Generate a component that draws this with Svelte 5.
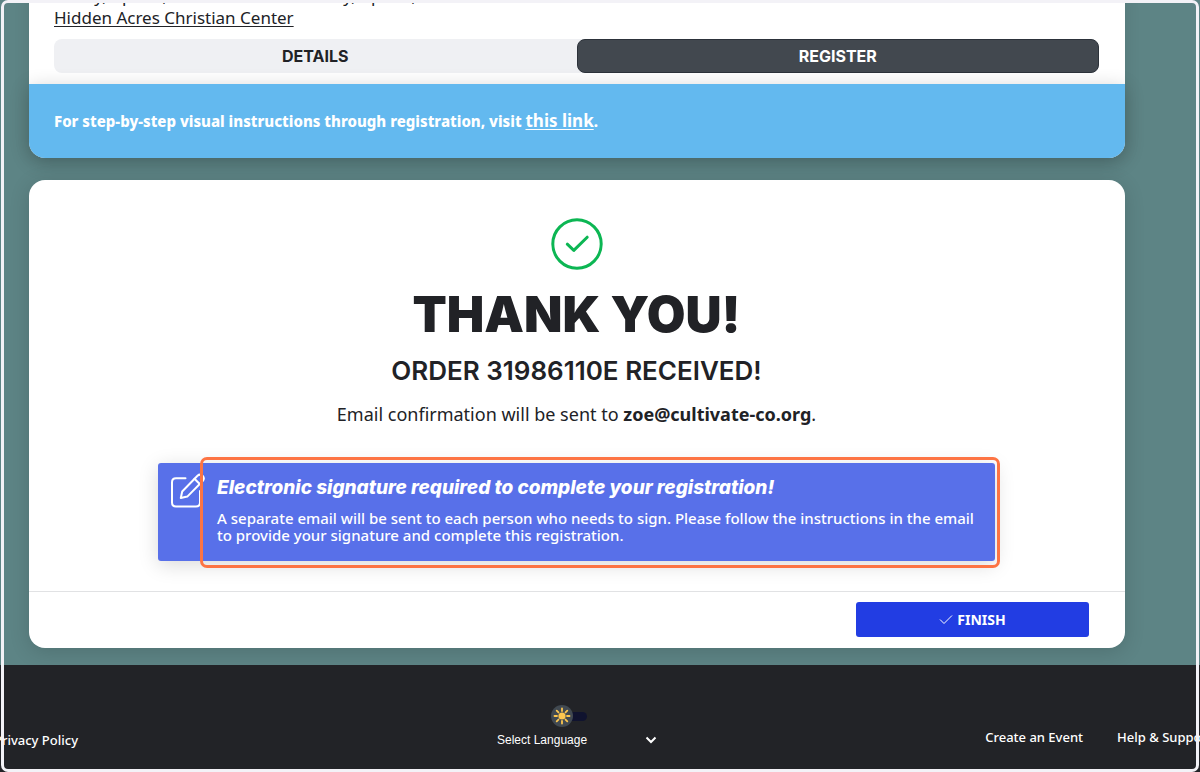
<script>
  let dark = $state(false);
  let language = $state('');
</script>

<div class="page">
  <main>
    <section class="event">
      <div class="info">
        <p class="dates">Friday, April 4, 2025 5:00 PM - Sunday, April 6, 2025 11:00 AM</p>
        <a class="venue" href="#venue">Hidden Acres Christian Center</a>
        <nav class="tabs">
          <button type="button">DETAILS</button>
          <button type="button" class="active">REGISTER</button>
        </nav>
      </div>
      <p class="banner">
        For step-by-step visual instructions through registration, visit <a href="#guide">this link</a>.
      </p>
    </section>

    <section class="order">
      <div class="summary">
        <svg class="done" viewBox="0 0 52 52" aria-hidden="true">
          <circle cx="26" cy="26" r="24.2" />
          <path d="M16.3 26.2 L22.8 32.4 L36.2 19.2" />
        </svg>
        <h1>THANK YOU!</h1>
        <h2>ORDER 31986110E RECEIVED!</h2>
        <p class="mail">Email confirmation will be sent to <strong>zoe@cultivate-co.org</strong>.</p>
        <div class="notice">
          <svg class="edit" viewBox="0 0 36 36" aria-hidden="true">
            <path d="M15.5 5.3 H6 Q2 5.3 2 9.3 V29.5 Q2 33.5 6 33.5 H26 Q30 33.5 30 29.5 V18" />
            <path d="M10.8 25 L12.2 18.5 L27.5 2.8 Q30 0.5 32.6 2.8 Q35 5.3 32.7 8 L17.3 23.6 Z" />
            <path d="M24.5 5.8 L29.7 11" />
          </svg>
          <div class="message">
            <h3>Electronic signature required to complete your registration!</h3>
            <p>
              A separate email will be sent to each person who needs to sign. Please follow the
              instructions in the email to provide your signature and complete this registration.
            </p>
          </div>
          <span class="highlight"></span>
        </div>
      </div>
      <div class="actions">
        <button type="button">
          <svg viewBox="0 0 14 12" aria-hidden="true"><path d="M1 5.5 L5 9.5 L13 1.5" /></svg>
          FINISH
        </button>
      </div>
    </section>
  </main>

  <footer>
    <a class="privacy" href="#privacy">Privacy Policy</a>
    <div class="prefs">
      <label class="theme">
        <input type="checkbox" bind:checked={dark} aria-label="Dark theme" />
        <svg viewBox="0 0 22 22" aria-hidden="true">
          <circle class="disc" cx="11" cy="11" r="11" />
          <g class="rays">
            {#each [0, 45, 90, 135, 180, 225, 270, 315] as angle}
              <path d="M11 3.5 V6" transform="rotate({angle} 11 11)" />
            {/each}
          </g>
          <circle class="sun" cx="11" cy="11" r="3.6" />
        </svg>
      </label>
      <div class="language">
        <select bind:value={language} aria-label="Language">
          <option value="">Select Language</option>
          <option value="es">Spanish</option>
        </select>
        <svg viewBox="0 0 12 8" aria-hidden="true"><path d="M1.5 1.5 L6 6 L10.5 1.5" /></svg>
      </div>
    </div>
    <div class="links">
      <a href="#create">Create an Event</a>
      <a href="#help">Help &amp; Support</a>
    </div>
  </footer>
  <div class="frame"></div>
</div>

<style>
  :global(body) {
    margin: 0;
    background: #222327;
  }
  .page {
    min-height: 100vh;
    display: flex;
    flex-direction: column;
    overflow: hidden;
    background: #5d8485;
    color: #212226;
    font-family: "Noto Sans", "Open Sans", sans-serif;
    font-size: 17px;
  }
  h1, h2, h3, p {
    margin: 0;
  }
  a {
    color: inherit;
  }
  button {
    font: inherit;
    cursor: pointer;
  }
  main {
    display: flex;
    flex-direction: column;
    gap: 22px;
    padding: 0 75px 17px 29px;
  }
  .event {
    margin-top: -16px;
    background: #fff;
    border-radius: 16px;
    box-shadow: 0 2px 16px rgba(0, 0, 0, 0.1);
  }
  .info {
    padding: 0 26px 11px 25px;
    line-height: 24px;
  }
  .dates {
    white-space: nowrap;
  }
  .venue {
    display: block;
    width: fit-content;
    line-height: 20px;
    text-underline-offset: 2px;
  }
  .tabs {
    display: grid;
    grid-template-columns: 1fr 1fr;
    margin-top: 11px;
    border-radius: 8px;
    background: #eff0f3;
  }
  .tabs button {
    padding: 4px;
    border: 1px solid transparent;
    border-radius: 8px;
    background: none;
    color: #212226;
    font-family: Inter, sans-serif;
    font-size: 16px;
    font-weight: 700;
    line-height: 24px;
  }
  .tabs .active {
    border-color: #2c323a;
    background: #42484f;
    color: #fff;
  }
  .banner {
    padding: 25px 25px 25px;
    border-radius: 0 0 16px 16px;
    background: #63b9ef;
    box-shadow: 0 4px 20px rgba(0, 0, 0, 0.2);
    color: #fff;
    font-size: 15px;
    font-weight: 800;
    line-height: 24px;
  }
  .banner a {
    font-size: 17px;
    font-weight: 700;
    line-height: 20px;
    text-underline-offset: 2px;
  }
  .order {
    border-radius: 16px;
    background: #fff;
    box-shadow: 0 4px 20px rgba(0, 0, 0, 0.15);
  }
  .summary {
    display: flex;
    flex-direction: column;
    align-items: center;
    padding: 38px 25px 30px 24px;
    text-align: center;
  }
  .done {
    width: 52px;
    height: 52px;
    fill: none;
    stroke: #0cb653;
    stroke-width: 3;
    stroke-linecap: round;
    stroke-linejoin: round;
  }
  h1 {
    margin-top: 16px;
    font-family: Inter, sans-serif;
    font-size: 50px;
    font-weight: 900;
    line-height: 56px;
  }
  h2 {
    margin-top: 14px;
    font-family: Inter, sans-serif;
    font-size: 26px;
    font-weight: 600;
    line-height: 30px;
  }
  .mail {
    margin-top: 16px;
    font-size: 18px;
    line-height: 24px;
  }
  .notice {
    position: relative;
    display: flex;
    gap: 11px;
    box-sizing: border-box;
    width: 80%;
    max-width: 837px;
    margin-top: 37px;
    padding: 13px 12px 17px;
    border-radius: 3px;
    background: #5870e9;
    box-shadow: 0 4px 20px rgba(0, 0, 0, 0.15);
    color: #fff;
    text-align: left;
  }
  .edit {
    flex: none;
    width: 36px;
    height: 36px;
    margin-top: -3px;
    fill: none;
    stroke: #fff;
    stroke-width: 2;
    stroke-linejoin: round;
    stroke-linecap: round;
  }
  h3 {
    font-family: Inter, sans-serif;
    font-size: 19px;
    font-style: italic;
    font-weight: 800;
    line-height: 24px;
  }
  .message p {
    margin-top: 10px;
    font-size: 15px;
    font-weight: 500;
    line-height: 17px;
  }
  .highlight {
    position: absolute;
    inset: -6px -5px -7px 42px;
    border: 3px solid #fd7444;
    border-radius: 7px;
    pointer-events: none;
  }
  .actions {
    display: flex;
    justify-content: flex-end;
    padding: 10px 36px 11px;
    border-top: 1px solid #e1e2e4;
  }
  .actions button {
    display: flex;
    align-items: center;
    justify-content: center;
    gap: 4px;
    width: 233px;
    padding: 7px;
    border: 0;
    border-radius: 3px;
    background: #223de3;
    color: #fff;
    font-size: 14px;
    font-weight: 700;
    line-height: 21px;
  }
  .actions svg {
    width: 14px;
    height: 12px;
    fill: none;
    stroke: #fff;
  }
  footer {
    position: relative;
    flex: 1;
    display: grid;
    grid-template-columns: 1fr 160px 1fr;
    align-items: start;
    padding: 40px 0 24px;
    background: #222327;
    color: #fff;
    font-size: 13px;
    font-weight: 500;
    line-height: 18px;
    white-space: nowrap;
  }
  footer a {
    text-decoration: none;
  }
  .privacy {
    margin: 26px 0 0 -6px;
  }
  .prefs {
    display: flex;
    flex-direction: column;
    align-items: center;
    width: 160px;
    margin-left: -23px;
  }
  .theme {
    display: flex;
    align-items: center;
    width: 52px;
    height: 22px;
  }
  .theme input {
    appearance: none;
    flex: none;
    width: 36px;
    height: 9px;
    margin: 0;
    border-radius: 5px;
    background: #10132f;
  }
  .theme svg {
    flex: none;
    width: 22px;
    height: 22px;
    margin-left: -36px;
  }
  .disc {
    fill: #414951;
  }
  .sun {
    fill: #fdc64f;
  }
  .rays {
    stroke: #fdc64f;
    stroke-width: 1.8;
    stroke-linecap: round;
  }
  .language {
    display: flex;
    align-items: center;
    width: 160px;
    margin-top: 4px;
  }
  .language select {
    appearance: none;
    flex: 1;
    height: 18px;
    margin: 0 -12px 0 0;
    padding: 0 12px 0 0;
    border: 0;
    background: none;
    color: #fff;
    font: 12px "Liberation Sans", sans-serif;
  }
  .language svg {
    width: 12px;
    height: 8px;
    fill: none;
    stroke: #fff;
    stroke-width: 2;
    pointer-events: none;
  }
  .links {
    display: flex;
    justify-content: flex-end;
    gap: 34px;
    margin: 23px -12px 0 0;
  }
  .frame {
    position: fixed;
    inset: 0 1px;
    border: 3px solid #f3f2f7;
    border-radius: 7px;
    pointer-events: none;
  }
</style>
